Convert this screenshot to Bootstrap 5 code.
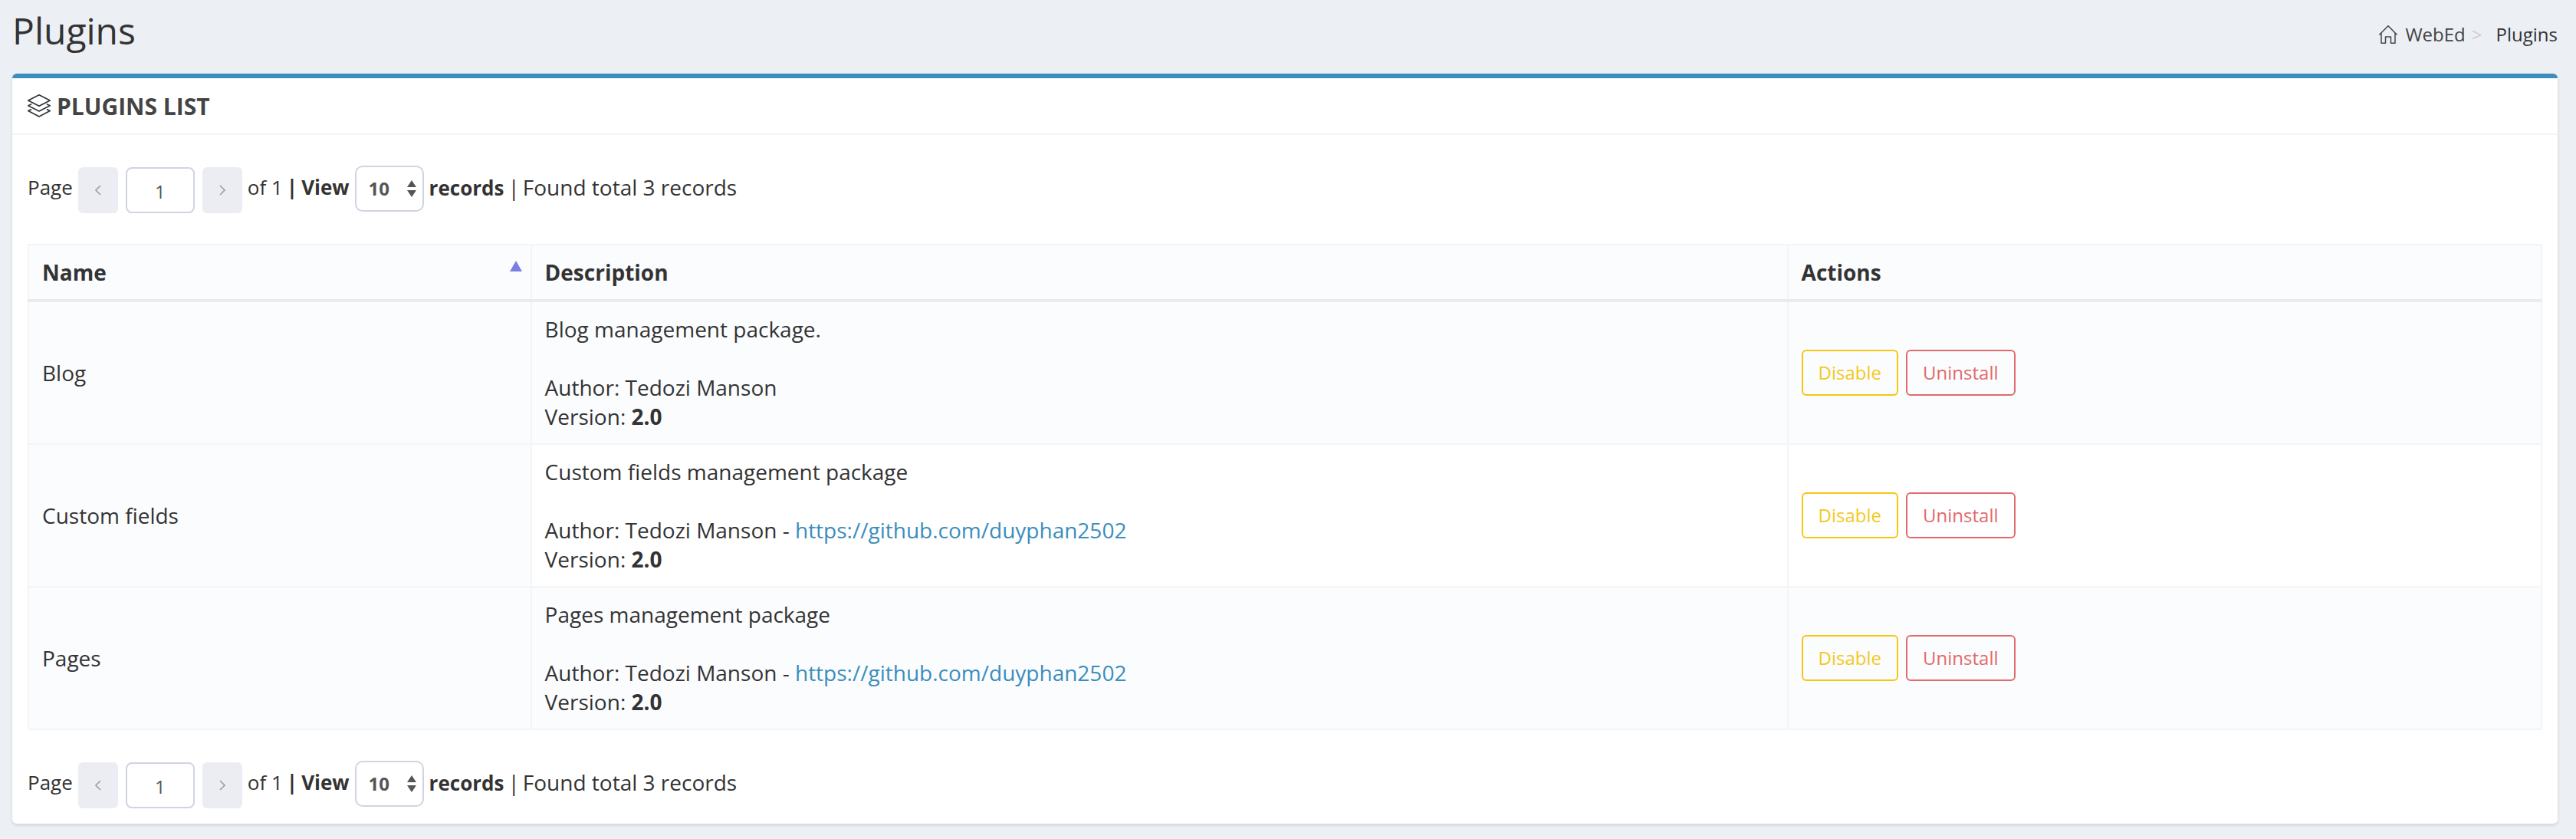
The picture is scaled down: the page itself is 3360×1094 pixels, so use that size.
<!DOCTYPE html>
<html lang="en">
<head>
<meta charset="utf-8">
<meta name="viewport" content="width=device-width, initial-scale=1">
<title>Plugins | WebEd</title>
<link href="https://cdn.jsdelivr.net/npm/bootstrap@5.3.0/dist/css/bootstrap.min.css" rel="stylesheet">
<style>
body { font-family: "Open Sans", sans-serif; font-size: 28px; line-height: 38px; color: #333; background: #ecf0f5; }
.page-wrap { padding: 8px 24px 20px 16px; }
.page-head { min-height: 88px; }
.page-title { font-size: 48px; line-height: 64px; font-weight: 400; }
.breadcrumb { --bs-breadcrumb-divider: ">"; --bs-breadcrumb-divider-color: #ccc; --bs-breadcrumb-item-padding-x: 8px; font-size: 24px; line-height: 32px; padding-top: 21px; }
.breadcrumb-item + .breadcrumb-item::before { padding-right: 18px; }
.breadcrumb a { color: #444; text-decoration: none; gap: 10px; }
.breadcrumb .active { color: #333; }
.panel { border: 0; border-top: 6px solid #3c8dbc; border-radius: 6px; box-shadow: 0 2px 4px rgba(0,0,0,.12); color: inherit; }
.panel-head { height: 74px; padding: 0 20px; border-bottom: 2px solid #f4f4f4; gap: 8px; }
.panel-title { padding-top: 2px; font-size: 30px; line-height: 40px; font-weight: 700; color: #444; }
.panel-content { padding: 40px 20px 20px; }
.pager { font-size: 26px; line-height: 36px; gap: 7px; height: 62px; }
.pager .text-part { padding-bottom: 6px; gap: 5px; }
.found-note { font-size: 28px; gap: 4px; }
.pager-steps { gap: 10px; padding-top: 2px; }
.step-btn { width: 52px; height: 60px; padding: 0; border: 0; border-radius: 6px; background: #ecedf3; color: #a0a0a0; }
.page-input { width: 90px; height: 60px; padding: 4px 8px 2px; border: 2px solid #d1d4e0; border-radius: 8px; font-size: 24px; color: #555; text-align: center; }
.size-select { width: 90px; height: 60px; margin-bottom: 2px; padding: 0 16px; border: 2px solid #d1d4e0; border-radius: 10px; font-size: 24px; line-height: 32px; font-weight: 700; color: #555;
  background-image: url("data:image/svg+xml,%3Csvg xmlns='http://www.w3.org/2000/svg' viewBox='0 0 12 22'%3E%3Cpath fill='%23555' d='M6 0l6 9H0zM0 13h12l-6 9z'/%3E%3C/svg%3E"); background-size: 12px 22px; background-position: right 8px center; }
.plugin-table { --bs-table-color: #333; --bs-table-striped-color: #333; --bs-table-striped-bg: #fbfcfe; table-layout: fixed; margin: 40px 0; border-color: #f2f4f5; }
.plugin-table > :not(caption) > * > * { padding: 16px 16px 16px 17px; border-width: 2px; }
.plugin-table > thead > tr > th { background: #fbfcfe; border-bottom: 4px solid #e7ecf1; }
.plugin-table > tbody > tr > td:first-child { background: #fbfcfe; }
.plugin-table > thead > tr > th.sorted { padding-right: 10px; }
.plugin-table a { color: #3c8dbc; text-decoration: none; }
.col-name { width: 20%; } .col-desc { width: 50%; } .col-act { width: 30%; }
.sort-mark { margin-top: 4px; }
.action-set { gap: 10px; }
.action-btn { height: 60px; padding: 0 20px; border-width: 2px; border-radius: 6px; font-size: 24px; line-height: 32px; }
.btn-outline-warning { --bs-btn-color: #f3c920; --bs-btn-border-color: #f5c710; }
.btn-outline-danger { --bs-btn-color: #e26a6a; --bs-btn-border-color: #e26a6a; }
</style>
</head>
<body>
<div class="container-fluid page-wrap">
  <header class="page-head d-flex justify-content-between align-items-start">
    <h1 class="page-title m-0">Plugins</h1>
    <nav aria-label="breadcrumb">
      <ol class="breadcrumb m-0">
        <li class="breadcrumb-item"><a href="#" class="d-flex align-items-center">
          <svg width="24" height="24" viewBox="0 0 24 24" fill="none" stroke="#444" stroke-width="1.5" stroke-linejoin="round" stroke-linecap="round" aria-hidden="true"><path d="M.8 12L12 .8 23.2 12M3 10v13.2h5.5v-8.200h7v8.200H21V10"/></svg>WebEd</a></li>
        <li class="breadcrumb-item active" aria-current="page">Plugins</li>
      </ol>
    </nav>
  </header>

  <main class="card panel">
    <div class="panel-head d-flex align-items-center">
      <svg width="30" height="30" viewBox="0 0 30 30" fill="none" stroke="#2f353b" stroke-width="1.7" stroke-linejoin="round" stroke-linecap="round" aria-hidden="true"><path d="M15 .8L29.200 8 15 15.200.8 8zM4.500 13L.8 14.800 15 22l14.200-7.200-3.700-1.800M4.500 19.800L.8 21.600 15 29l14.200-7.400-3.700-1.800"/></svg>
      <h2 class="panel-title m-0">PLUGINS LIST</h2>
    </div>
    <div class="panel-content">
      <div class="pager d-flex align-items-center">
        <label class="text-part" for="page-top">Page</label>
        <div class="pager-steps d-flex">
          <button type="button" class="btn step-btn" aria-label="Previous page"><svg class="d-block mx-auto" width="8" height="14" viewBox="0 0 8 14" fill="none" stroke="currentColor" stroke-width="1.7" aria-hidden="true"><path d="M7 1L1 7l6 6"/></svg></button>
          <input id="page-top" class="form-control page-input" type="text" value="1">
          <button type="button" class="btn step-btn" aria-label="Next page"><svg class="d-block mx-auto" width="8" height="14" viewBox="0 0 8 14" fill="none" stroke="currentColor" stroke-width="1.7" aria-hidden="true"><path d="M1 1l6 6-6 6"/></svg></button>
        </div>
        <label class="text-part d-flex" for="size-top">of 1 <b>|</b> <b>View</b></label>
        <select id="size-top" class="form-select size-select"><option>10</option></select>
        <span class="text-part d-flex align-items-baseline"><b>records</b> <span class="found-note d-flex"><span>|</span> <span>Found total 3 records</span></span></span>
      </div>

      <table class="table table-bordered table-striped align-middle plugin-table">
        <thead>
          <tr>
            <th scope="col" class="col-name sorted" aria-sort="ascending"><div class="d-flex justify-content-between align-items-start">Name<svg class="sort-mark" width="18" height="14" viewBox="0 0 18 14" aria-hidden="true"><path fill="#7b80e0" d="M9 0l8 14H1z"/></svg></div></th>
            <th scope="col" class="col-desc">Description</th>
            <th scope="col" class="col-act">Actions</th>
          </tr>
        </thead>
        <tbody>
          <tr>
            <td>Blog</td>
            <td>Blog management package.<br><br>Author: Tedozi Manson<br>Version: <b>2.0</b></td>
            <td><div class="d-flex action-set"><button type="button" class="btn btn-outline-warning action-btn">Disable</button><button type="button" class="btn btn-outline-danger action-btn">Uninstall</button></div></td>
          </tr>
          <tr>
            <td>Custom fields</td>
            <td>Custom fields management package<br><br>Author: Tedozi Manson - <a href="https://github.com/duyphan2502">https://github.com/duyphan2502</a><br>Version: <b>2.0</b></td>
            <td><div class="d-flex action-set"><button type="button" class="btn btn-outline-warning action-btn">Disable</button><button type="button" class="btn btn-outline-danger action-btn">Uninstall</button></div></td>
          </tr>
          <tr>
            <td>Pages</td>
            <td>Pages management package<br><br>Author: Tedozi Manson - <a href="https://github.com/duyphan2502">https://github.com/duyphan2502</a><br>Version: <b>2.0</b></td>
            <td><div class="d-flex action-set"><button type="button" class="btn btn-outline-warning action-btn">Disable</button><button type="button" class="btn btn-outline-danger action-btn">Uninstall</button></div></td>
          </tr>
        </tbody>
      </table>

      <div class="pager d-flex align-items-center">
        <label class="text-part" for="page-bottom">Page</label>
        <div class="pager-steps d-flex">
          <button type="button" class="btn step-btn" aria-label="Previous page"><svg class="d-block mx-auto" width="8" height="14" viewBox="0 0 8 14" fill="none" stroke="currentColor" stroke-width="1.7" aria-hidden="true"><path d="M7 1L1 7l6 6"/></svg></button>
          <input id="page-bottom" class="form-control page-input" type="text" value="1">
          <button type="button" class="btn step-btn" aria-label="Next page"><svg class="d-block mx-auto" width="8" height="14" viewBox="0 0 8 14" fill="none" stroke="currentColor" stroke-width="1.7" aria-hidden="true"><path d="M1 1l6 6-6 6"/></svg></button>
        </div>
        <label class="text-part d-flex" for="size-bottom">of 1 <b>|</b> <b>View</b></label>
        <select id="size-bottom" class="form-select size-select"><option>10</option></select>
        <span class="text-part d-flex align-items-baseline"><b>records</b> <span class="found-note d-flex"><span>|</span> <span>Found total 3 records</span></span></span>
      </div>
    </div>
  </main>
</div>
<script src="https://cdn.jsdelivr.net/npm/bootstrap@5.3.0/dist/js/bootstrap.bundle.min.js"></script>
</body>
</html>
